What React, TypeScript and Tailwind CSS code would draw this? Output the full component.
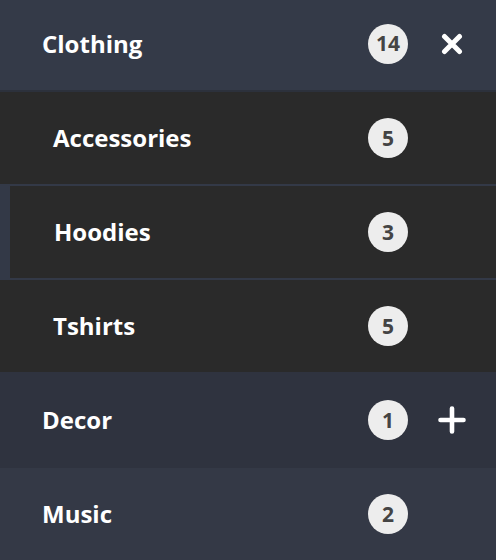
import React from "react";

type Row = {
  label: string;
  count: number;
  icon?: "close" | "plus";
  kind: "top" | "sub" | "subActive" | "decor" | "music";
};

const rows: Row[] = [
  { label: "Clothing", count: 14, icon: "close", kind: "top" },
  { label: "Accessories", count: 5, kind: "sub" },
  { label: "Hoodies", count: 3, kind: "subActive" },
  { label: "Tshirts", count: 5, kind: "sub" },
  { label: "Decor", count: 1, icon: "plus", kind: "decor" },
  { label: "Music", count: 2, kind: "music" },
];

function CloseIcon() {
  return (
    <svg width="22" height="22" viewBox="0 0 22 22" fill="none">
      <path d="M3.5 3.5L18.5 18.5M18.5 3.5L3.5 18.5" stroke="#fff" strokeWidth="5" strokeLinecap="round" />
    </svg>
  );
}

function PlusIcon() {
  return (
    <svg width="28" height="28" viewBox="0 0 28 28" fill="none">
      <path d="M14 2.5V25.5M2.5 14H25.5" stroke="#fff" strokeWidth="4.6" strokeLinecap="round" />
    </svg>
  );
}

export default function App() {
  const rowClass = (kind: Row["kind"]) => {
    switch (kind) {
      case "top":
        return "h-[92px] bg-[#343a48] border-b-2 border-[#2c313c] pl-[42px] pb-[3px]";
      case "sub":
        return "h-[92px] bg-[#2a2a2a] pl-[53px]";
      case "subActive":
        return "h-[96px] bg-[#2a2a2a] border-y-2 border-l-[10px] border-[#333947] pl-[44px]";
      case "decor":
        return "h-[96px] bg-[#2f333f] pl-[42px]";
      default:
        return "h-[92px] bg-[#343946] pl-[42px]";
    }
  };

  return (
    <div
      className="w-[496px] h-[560px] overflow-hidden bg-[#343946]"
      style={{ fontFamily: '"Open Sans", "Noto Sans", sans-serif' }}
    >
      {rows.map((row) => (
        <div key={row.label} className={`flex items-center ${rowClass(row.kind)}`}>
          <span className="flex-1 text-[24px] font-bold text-white leading-none">{row.label}</span>
          <span className="flex h-[40px] w-[40px] items-center justify-center rounded-full bg-[#ededed] text-[21px] font-bold text-[#444] leading-none">
            {row.count}
          </span>
          <span className="flex w-[88px] items-center justify-center">
            {row.icon === "close" && <CloseIcon />}
            {row.icon === "plus" && <PlusIcon />}
          </span>
        </div>
      ))}
    </div>
  );
}
